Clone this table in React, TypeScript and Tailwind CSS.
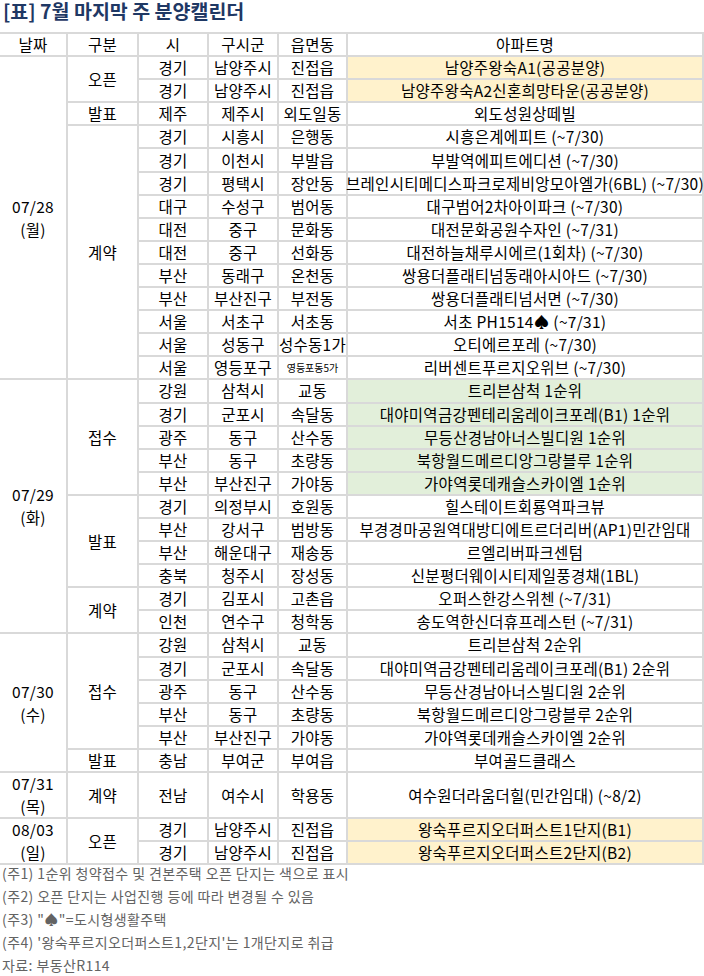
import clsx from "clsx";

type Tone = "yellow" | "green";

type Row = {
  sido: string;
  gu: string;
  dong: string;
  apt: string;
  tone?: Tone;
  smallDong?: boolean;
};

type Group = { kind: string; rows: Row[] };

type Day = { date: string; weekday: string; tall?: boolean; groups: Group[] };

const SPAN: Record<number, string> = {
  1: "row-span-1",
  2: "row-span-2",
  4: "row-span-4",
  5: "row-span-5",
  6: "row-span-6",
  11: "row-span-11",
  14: "row-span-14",
};

const TONE: Record<Tone, string> = {
  yellow: "bg-[#fff2cc]",
  green: "bg-[#e2efda]",
};

const days: Day[] = [
  {
    date: "07/28",
    weekday: "(월)",
    groups: [
      {
        kind: "오픈",
        rows: [
          { sido: "경기", gu: "남양주시", dong: "진접읍", apt: "남양주왕숙A1(공공분양)", tone: "yellow" },
          { sido: "경기", gu: "남양주시", dong: "진접읍", apt: "남양주왕숙A2신혼희망타운(공공분양)", tone: "yellow" },
        ],
      },
      {
        kind: "발표",
        rows: [{ sido: "제주", gu: "제주시", dong: "외도일동", apt: "외도성원상떼빌" }],
      },
      {
        kind: "계약",
        rows: [
          { sido: "경기", gu: "시흥시", dong: "은행동", apt: "시흥은계에피트 (~7/30)" },
          { sido: "경기", gu: "이천시", dong: "부발읍", apt: "부발역에피트에디션 (~7/30)" },
          { sido: "경기", gu: "평택시", dong: "장안동", apt: "브레인시티메디스파크로제비앙모아엘가(6BL) (~7/30)" },
          { sido: "대구", gu: "수성구", dong: "범어동", apt: "대구범어2차아이파크 (~7/30)" },
          { sido: "대전", gu: "중구", dong: "문화동", apt: "대전문화공원수자인 (~7/31)" },
          { sido: "대전", gu: "중구", dong: "선화동", apt: "대전하늘채루시에르(1회차) (~7/30)" },
          { sido: "부산", gu: "동래구", dong: "온천동", apt: "쌍용더플래티넘동래아시아드 (~7/30)" },
          { sido: "부산", gu: "부산진구", dong: "부전동", apt: "쌍용더플래티넘서면 (~7/30)" },
          { sido: "서울", gu: "서초구", dong: "서초동", apt: "서초 PH1514♠ (~7/31)" },
          { sido: "서울", gu: "성동구", dong: "성수동1가", apt: "오티에르포레 (~7/30)" },
          { sido: "서울", gu: "영등포구", dong: "영등포동5가", apt: "리버센트푸르지오위브 (~7/30)", smallDong: true },
        ],
      },
    ],
  },
  {
    date: "07/29",
    weekday: "(화)",
    groups: [
      {
        kind: "접수",
        rows: [
          { sido: "강원", gu: "삼척시", dong: "교동", apt: "트리븐삼척 1순위", tone: "green" },
          { sido: "경기", gu: "군포시", dong: "속달동", apt: "대야미역금강펜테리움레이크포레(B1) 1순위", tone: "green" },
          { sido: "광주", gu: "동구", dong: "산수동", apt: "무등산경남아너스빌디원 1순위", tone: "green" },
          { sido: "부산", gu: "동구", dong: "초량동", apt: "북항월드메르디앙그랑블루 1순위", tone: "green" },
          { sido: "부산", gu: "부산진구", dong: "가야동", apt: "가야역롯데캐슬스카이엘 1순위", tone: "green" },
        ],
      },
      {
        kind: "발표",
        rows: [
          { sido: "경기", gu: "의정부시", dong: "호원동", apt: "힐스테이트회룡역파크뷰" },
          { sido: "부산", gu: "강서구", dong: "범방동", apt: "부경경마공원역대방디에트르더리버(AP1)민간임대" },
          { sido: "부산", gu: "해운대구", dong: "재송동", apt: "르엘리버파크센텀" },
          { sido: "충북", gu: "청주시", dong: "장성동", apt: "신분평더웨이시티제일풍경채(1BL)" },
        ],
      },
      {
        kind: "계약",
        rows: [
          { sido: "경기", gu: "김포시", dong: "고촌읍", apt: "오퍼스한강스위첸 (~7/31)" },
          { sido: "인천", gu: "연수구", dong: "청학동", apt: "송도역한신더휴프레스턴 (~7/31)" },
        ],
      },
    ],
  },
  {
    date: "07/30",
    weekday: "(수)",
    groups: [
      {
        kind: "접수",
        rows: [
          { sido: "강원", gu: "삼척시", dong: "교동", apt: "트리븐삼척 2순위" },
          { sido: "경기", gu: "군포시", dong: "속달동", apt: "대야미역금강펜테리움레이크포레(B1) 2순위" },
          { sido: "광주", gu: "동구", dong: "산수동", apt: "무등산경남아너스빌디원 2순위" },
          { sido: "부산", gu: "동구", dong: "초량동", apt: "북항월드메르디앙그랑블루 2순위" },
          { sido: "부산", gu: "부산진구", dong: "가야동", apt: "가야역롯데캐슬스카이엘 2순위" },
        ],
      },
      {
        kind: "발표",
        rows: [{ sido: "충남", gu: "부여군", dong: "부여읍", apt: "부여골드클래스" }],
      },
    ],
  },
  {
    date: "07/31",
    weekday: "(목)",
    tall: true,
    groups: [
      {
        kind: "계약",
        rows: [{ sido: "전남", gu: "여수시", dong: "학용동", apt: "여수원더라움더힐(민간임대) (~8/2)" }],
      },
    ],
  },
  {
    date: "08/03",
    weekday: "(일)",
    groups: [
      {
        kind: "오픈",
        rows: [
          { sido: "경기", gu: "남양주시", dong: "진접읍", apt: "왕숙푸르지오더퍼스트1단지(B1)", tone: "yellow" },
          { sido: "경기", gu: "남양주시", dong: "진접읍", apt: "왕숙푸르지오더퍼스트2단지(B2)", tone: "yellow" },
        ],
      },
    ],
  },
];

const notes = [
  "(주1) 1순위 청약접수 및 견본주택 오픈 단지는 색으로 표시",
  "(주2) 오픈 단지는 사업진행 등에 따라 변경될 수 있음",
  "(주3) \"♠\"=도시형생활주택",
  "(주4) '왕숙푸르지오더퍼스트1,2단지'는 1개단지로 취급",
  "자료: 부동산R114",
];

function Cell({
  span = 1,
  className,
  children,
}: {
  span?: number;
  className?: string;
  children: React.ReactNode;
}) {
  return (
    <div
      className={clsx(
        "flex items-center justify-center whitespace-nowrap text-center",
        SPAN[span],
        className ?? "bg-white"
      )}
    >
      {children}
    </div>
  );
}

export default function App() {
  const cells: React.ReactNode[] = [];

  days.forEach((d) => {
    const unit = d.tall ? 2 : 1;
    const total = d.groups.reduce((n, g) => n + g.rows.length, 0) * unit;
    d.groups.forEach((g, gi) => {
      g.rows.forEach((r, ri) => {
        const key = `${d.date}-${gi}-${ri}`;
        if (gi === 0 && ri === 0) {
          cells.push(
            <Cell key={`${key}-date`} span={total}>
              <div className="flex flex-col leading-[23px]">
                <span>{d.date}</span>
                <span>{d.weekday}</span>
              </div>
            </Cell>
          );
        }
        if (ri === 0) {
          cells.push(
            <Cell key={`${key}-kind`} span={g.rows.length * unit}>
              {g.kind}
            </Cell>
          );
        }
        cells.push(
          <Cell key={`${key}-sido`} span={unit}>
            {r.sido}
          </Cell>,
          <Cell key={`${key}-gu`} span={unit}>
            {r.gu}
          </Cell>,
          <Cell key={`${key}-dong`} span={unit}>
            <span className={r.smallDong ? "text-[10px] tracking-normal" : undefined}>{r.dong}</span>
          </Cell>,
          <Cell
            key={`${key}-apt`}
            span={unit}
            className={r.tone ? TONE[r.tone] : "bg-white"}
          >
            {r.apt}
          </Cell>
        );
      });
    });
  });

  return (
    <div className="h-[976px] w-[704px] overflow-hidden bg-white font-['Noto_Sans_CJK_KR',sans-serif] text-black">
      <div className="h-[32px] pl-[3px]">
        <h1 className="text-[19.5px] font-bold leading-[22px] text-[#1f3864]">
          [표] 7월 마지막 주 분양캘린더
        </h1>
      </div>

      <div className="grid auto-rows-[21.1px] grid-cols-[66px_69px_68px_68px_67px_354px] gap-[2px] bg-[#d9d9d9] pb-[2px] pr-[2px] pt-[2px] text-[15.5px] leading-[21px] tracking-[0.3px]">
        <Cell>날짜</Cell>
        <Cell>구분</Cell>
        <Cell>시</Cell>
        <Cell>구시군</Cell>
        <Cell>읍면동</Cell>
        <Cell>아파트명</Cell>
        {cells}
      </div>

      <div className="-mt-[3px] pl-[2px] text-[14px] leading-[23px] tracking-[0.4px] text-[#636363]">
        {notes.map((n) => (
          <p key={n}>{n}</p>
        ))}
      </div>
    </div>
  );
}
